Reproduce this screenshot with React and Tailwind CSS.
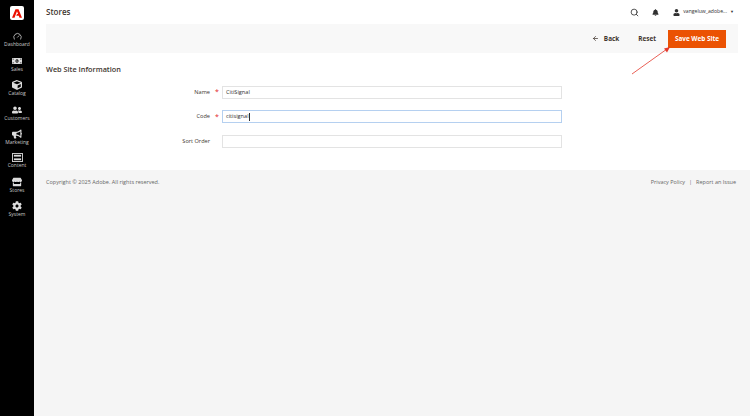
import { Search, ArrowLeft, Gauge } from 'lucide-react';
import { FaMoneyBillAlt, FaCube, FaUserFriends, FaBullhorn, FaStore, FaCog, FaBell, FaUser } from 'react-icons/fa';

function ContentIcon({ className }) {
  return (
    <svg viewBox="0 0 12 10" className={className} width="11" height="9">
      <rect x="0.5" y="0.5" width="11" height="9" fill="none" stroke="currentColor" />
      <rect x="2" y="2" width="8" height="2" fill="currentColor" />
      <rect x="2" y="6" width="8" height="2" fill="currentColor" />
    </svg>
  );
}

const navItems = [
  { label: 'Dashboard', icon: Gauge, size: 9 },
  { label: 'Sales', icon: FaMoneyBillAlt, size: 10 },
  { label: 'Catalog', icon: FaCube, size: 10 },
  { label: 'Customers', icon: FaUserFriends, size: 10 },
  { label: 'Marketing', icon: FaBullhorn, size: 10 },
  { label: 'Content', icon: ContentIcon, size: 10 },
  { label: 'Stores', icon: FaStore, size: 10 },
  { label: 'System', icon: FaCog, size: 10 },
];

function Field({ label, required, value, focused }) {
  return (
    <div className="flex items-center h-[13px]">
      <div className="w-[176px] flex justify-end items-center text-[5.6px] text-[#41362f]">
        <span>{label}</span>
        <span className="w-[7px] ml-[5px] text-[#e22626] text-[7px] leading-none">{required ? '*' : ''}</span>
      </div>
      <div className={`w-[340px] h-[13px] flex items-center px-[3px] text-[5.6px] text-[#303030] border ${focused ? 'border-[#b5d0f0]' : 'border-[#e3e3e3]'}`}>
        {value}
        {focused && <span className="w-px h-[8px] bg-[#303030]" />}
      </div>
    </div>
  );
}

export default function App() {
  return (
    <div className="relative flex w-[750px] h-[416px] overflow-hidden bg-[#f5f5f5] font-['Open_Sans',sans-serif]">
      <aside className="w-[34px] shrink-0 bg-black flex flex-col items-center">
        <div className="w-[14px] h-[14px] mt-[6px] mb-[10px] bg-white rounded-[2px] flex items-center justify-center">
          <svg viewBox="0 0 30 26" className="w-[10px] h-[9px]">
            <path d="M10.5 0h9L30 26h-7.5l-2.2-6h-7.6L15 14.5h3.2L15 6 7.5 26H0z" fill="#eb1000" />
          </svg>
        </div>
        {navItems.map(({ label, icon: Icon, size }) => (
          <div key={label} className="h-[24.2px] flex flex-col items-center justify-start w-full">
            <Icon size={size} className="text-[#dcdcdc] mt-[2px]" />
            <span className="text-[5px] leading-[7px] text-[#c8c8c8]">{label}</span>
          </div>
        ))}
      </aside>
      <main className="flex-1 flex flex-col">
        <div className="bg-white h-[170px] flex flex-col shrink-0 px-[12px]">
          <header className="h-[24px] flex items-center shrink-0 pr-[4px]">
            <h1 className="text-[8px] font-semibold text-[#41362f]">Stores</h1>
            <div className="ml-auto flex items-center text-[#303030]">
              <Search size={9} strokeWidth={2.2} />
              <FaBell size={7} className="ml-[13px]" />
              <FaUser size={7} className="ml-[14px]" />
              <span className="ml-[3px] text-[5.1px]">vangeluw_adobe...</span>
              <span className="ml-[3px] text-[4px]">▼</span>
            </div>
          </header>
          <div className="h-[29px] bg-[#f8f8f8] flex items-center justify-end pr-[12px]">
            <div className="flex items-center text-[6.4px] font-bold text-[#41362f]">
              <ArrowLeft size={7} strokeWidth={2.5} />
              <span className="ml-[5px]">Back</span>
            </div>
            <span className="ml-[19px] text-[6.4px] font-bold text-[#41362f]">Reset</span>
            <button className="ml-[12px] w-[58px] h-[18px] bg-[#eb5202] text-white text-[6.4px] font-bold">Save Web Site</button>
          </div>
          <h2 className="mt-[11px] text-[7.3px] font-semibold text-[#41362f] leading-[10px]">Web Site Information</h2>
          <div className="mt-[11.5px] flex flex-col gap-[11.5px]">
            <Field label="Name" required value="CitiSignal" />
            <Field label="Code" required value="citisignal" focused />
            <Field label="Sort Order" value="" />
          </div>
        </div>
        <footer className="flex justify-between items-center h-[24px] pl-[12px] pr-[14px] text-[5.5px] text-[#666]">
          <span>Copyright © 2025 Adobe. All rights reserved.</span>
          <span className="flex gap-[4px]">
            <span>Privacy Policy</span>
            <span>|</span>
            <span>Report an Issue</span>
          </span>
        </footer>
      </main>
      <svg className="absolute left-[630px] top-[44px] w-[44px] h-[32px] pointer-events-none" viewBox="0 0 44 32">
        <line x1="2" y1="30" x2="37" y2="5" stroke="#e5392c" strokeWidth="0.8" />
        <path d="M40 3 34 4.5 37 8.5z" fill="#e5392c" />
      </svg>
    </div>
  );
}
